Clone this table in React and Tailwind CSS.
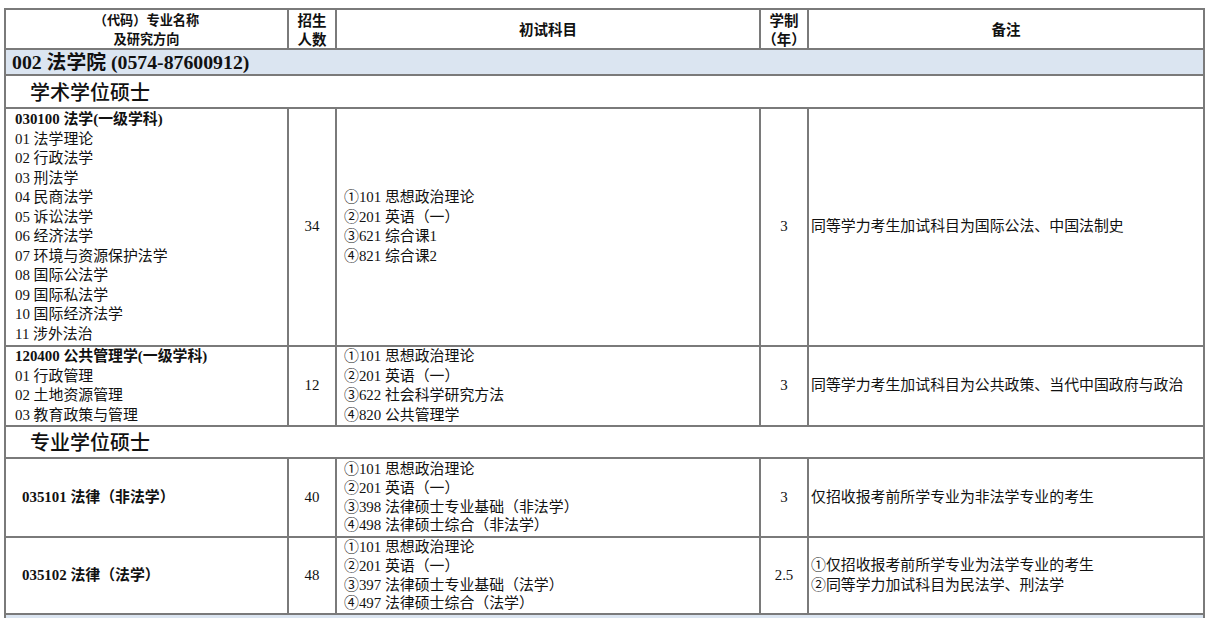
import React from "react";

const rows = [
  {
    title: "030100 法学(一级学科)",
    items: [
      "01 法学理论",
      "02 行政法学",
      "03 刑法学",
      "04 民商法学",
      "05 诉讼法学",
      "06 经济法学",
      "07 环境与资源保护法学",
      "08 国际公法学",
      "09 国际私法学",
      "10 国际经济法学",
      "11 涉外法治",
    ],
    count: "34",
    subjects: ["①101 思想政治理论", "②201 英语（一）", "③621 综合课1", "④821 综合课2"],
    years: "3",
    notes: ["同等学力考生加试科目为国际公法、中国法制史"],
    h: "h-[238px]",
  },
  {
    title: "120400 公共管理学(一级学科)",
    items: ["01 行政管理", "02 土地资源管理", "03 教育政策与管理"],
    count: "12",
    subjects: ["①101 思想政治理论", "②201 英语（一）", "③622 社会科学研究方法", "④820 公共管理学"],
    years: "3",
    notes: ["同等学力考生加试科目为公共政策、当代中国政府与政治"],
    h: "h-[80px]",
  },
];

const proRows = [
  {
    title: "035101 法律（非法学）",
    count: "40",
    subjects: ["①101 思想政治理论", "②201 英语（一）", "③398 法律硕士专业基础（非法学）", "④498 法律硕士综合（非法学）"],
    years: "3",
    notes: ["仅招收报考前所学专业为非法学专业的考生"],
    h: "h-[79px]",
  },
  {
    title: "035102 法律（法学）",
    count: "48",
    subjects: ["①101 思想政治理论", "②201 英语（一）", "③397 法律硕士专业基础（法学）", "④497 法律硕士综合（法学）"],
    years: "2.5",
    notes: ["①仅招收报考前所学专业为法学专业的考生", "②同等学力加试科目为民法学、刑法学"],
    h: "h-[77px]",
  },
];

const cell = "border-2 border-[#7a7a7a] p-0 align-middle";

const Lines = ({ list, className = "" }) => (
  <div className={`flex flex-col ${className}`}>
    {list.map((t) => (
      <span key={t} className="whitespace-nowrap">
        {t}
      </span>
    ))}
  </div>
);

export default function App() {
  return (
    <div className="h-screen overflow-hidden bg-white pl-[4px] pt-[8px] font-['Liberation_Serif','Noto_Sans_CJK_SC',serif] text-[14.9px] leading-[19.5px] text-[#111]">
      <table className="w-[1199px] table-fixed border-collapse">
        <colgroup>
          <col className="w-[283px]" />
          <col className="w-[48px]" />
          <col className="w-[424px]" />
          <col className="w-[48px]" />
          <col className="w-[396px]" />
        </colgroup>
        <tbody>
          <tr className="h-[40px] font-['Noto_Sans_CJK_SC',sans-serif] font-bold">
            <td className={`${cell} text-center text-[13.2px] leading-[19px]`}>
              <div>（代码）专业名称</div>
              <div>及研究方向</div>
            </td>
            <td className={`${cell} text-center text-[14.5px] leading-[19px]`}>
              <div>招生</div>
              <div>人数</div>
            </td>
            <td className={`${cell} text-center text-[14.5px]`}>初试科目</td>
            <td className={`${cell} text-center text-[14.5px] leading-[19px]`}>
              <div>学制</div>
              <div>（年）</div>
            </td>
            <td className={`${cell} text-center text-[14.5px]`}>备注</td>
          </tr>

          <tr className="h-[26px] bg-[#dbe5f1]">
            <td colSpan={5} className={`${cell} pl-[6px] text-[19.8px] font-bold leading-[22px]`}>
              002 法学院 (0574-87600912)
            </td>
          </tr>

          <tr className="h-[33px]">
            <td colSpan={5} className={`${cell} pl-[24px] font-['Noto_Sans_CJK_SC',sans-serif] text-[20px] font-medium leading-[26px]`}>
              学术学位硕士
            </td>
          </tr>

          {rows.map((r) => (
            <tr key={r.title} className={r.h}>
              <td className={`${cell} pl-[9px]`}>
                <div className="font-bold whitespace-nowrap">{r.title}</div>
                <Lines list={r.items} />
              </td>
              <td className={`${cell} text-center`}>{r.count}</td>
              <td className={`${cell} pl-[7px]`}>
                <Lines list={r.subjects} />
              </td>
              <td className={`${cell} text-center`}>{r.years}</td>
              <td className={`${cell} pl-[2px]`}>
                <Lines list={r.notes} />
              </td>
            </tr>
          ))}

          <tr className="h-[32px]">
            <td colSpan={5} className={`${cell} pl-[24px] font-['Noto_Sans_CJK_SC',sans-serif] text-[20px] font-medium leading-[26px]`}>
              专业学位硕士
            </td>
          </tr>

          {proRows.map((r) => (
            <tr key={r.title} className={r.h}>
              <td className={`${cell} pl-[16px] font-bold`}>{r.title}</td>
              <td className={`${cell} text-center`}>{r.count}</td>
              <td className={`${cell} pl-[7px]`}>
                <Lines list={r.subjects} className="leading-[18.8px]" />
              </td>
              <td className={`${cell} text-center`}>{r.years}</td>
              <td className={`${cell} pl-[2px]`}>
                <Lines list={r.notes} />
              </td>
            </tr>
          ))}

          <tr className="h-[30px] bg-[#dbe5f1]">
            <td colSpan={5} className={cell}></td>
          </tr>
        </tbody>
      </table>
    </div>
  );
}
